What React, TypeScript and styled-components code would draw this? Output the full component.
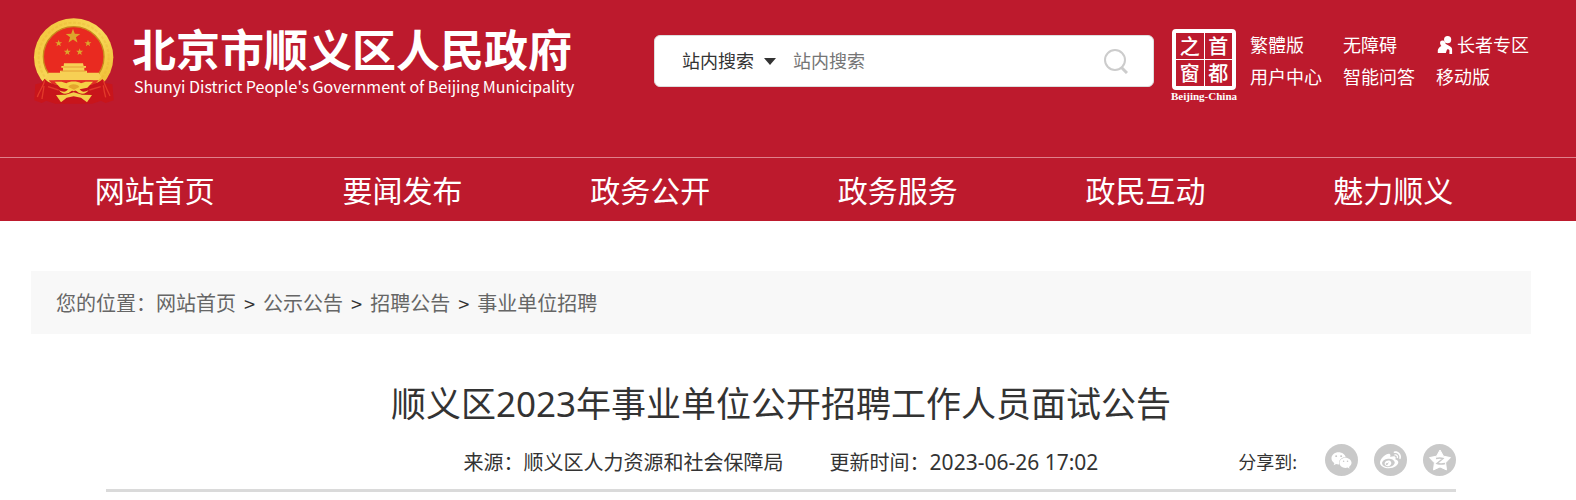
import React from "react";
import styled, { createGlobalStyle } from "styled-components";
import { FaWeibo, FaWeixin } from "react-icons/fa";

const RED = "#bd1a2d";

const GlobalStyle = createGlobalStyle`
  * { box-sizing: border-box; }
  body {
    margin: 0;
    background: #fff;
    color: #333;
    font-family: "Noto Sans", "Noto Sans CJK SC", sans-serif;
    font-size: 20px;
  }
  a { color: inherit; text-decoration: none; }
  h1, p { margin: 0; font-weight: 400; }
`;

const Page = styled.div`
  overflow-x: hidden;
`;

const Header = styled.header`
  background: ${RED};
  color: #fff;
`;

const Container = styled.div`
  padding: 0 45px 0 31px;
`;

const TopBar = styled(Container)`
  display: flex;
  align-items: flex-start;
  min-height: 157px;
  padding-top: 16px;
`;

const Brand = styled.a`
  display: flex;
  flex: none;
  width: 623px;
  gap: 13px;
`;

const BrandText = styled.span`
  display: flex;
  flex-direction: column;
  padding-top: 6px;
  font-family: "Noto Sans CJK SC", sans-serif;
  white-space: nowrap;
`;

const BrandName = styled.span`
  font-size: 44px;
  font-weight: 700;
  line-height: 52px;
`;

const BrandEnglish = styled.span`
  padding-left: 2px;
  font-size: 16px;
  line-height: 24px;
`;

const SearchForm = styled.form`
  display: flex;
  align-items: center;
  flex: 0 1 500px;
  height: 52px;
  margin-top: 19px;
  padding: 0 25px 0 27px;
  background: #fff;
  border: 1px solid #ddd;
  border-radius: 6px;
`;

const ScopeField = styled.label`
  display: flex;
  align-items: center;
  flex: none;
  gap: 10px;
  width: 111px;
`;

const ScopeSelect = styled.select`
  appearance: none;
  width: 72px;
  padding: 0;
  border: 0;
  background: none;
  color: #333;
  font: inherit;
  font-size: 18px;
  line-height: 26px;
`;

const SearchInput = styled.input`
  flex: 1;
  min-width: 0;
  padding: 0;
  border: 0;
  outline: 0;
  font: inherit;
  font-size: 18px;
  line-height: 26px;
  &::placeholder { color: #757575; opacity: 1; }
`;

const SearchButton = styled.button`
  display: flex;
  padding: 0;
  border: 0;
  background: none;
  cursor: pointer;
`;

const Seal = styled.a`
  display: flex;
  flex-direction: column;
  align-items: center;
  flex: none;
  width: 72px;
  margin: 13px 10px 0 14px;
`;

const SealGrid = styled.span`
  display: grid;
  grid-template-columns: 1fr 1fr;
  gap: 1px;
  width: 64px;
  border: 4px solid #fff;
  border-radius: 4px;
  background: #fff;
`;

const SealCell = styled.span`
  background: ${RED};
  font-family: "Noto Sans CJK SC", sans-serif;
  font-size: 20px;
  font-weight: 500;
  line-height: 26px;
  text-align: center;
`;

const SealCaption = styled.span`
  font-family: "Liberation Serif", serif;
  font-size: 11px;
  font-weight: 700;
  line-height: 12px;
  white-space: nowrap;
`;

const QuickLinks = styled.nav`
  display: grid;
  grid-template-columns: repeat(3, 93px);
  margin-top: 13px;
  font-size: 18px;
  line-height: 32px;
  white-space: nowrap;
`;

const QuickLink = styled.a`
  display: flex;
  align-items: center;
  gap: 4px;
`;

const MainNav = styled.nav`
  display: grid;
  grid-template-columns: repeat(6, 1fr);
  padding: 2px 59px 0 31px;
  border-top: 1px solid #e0808b;
`;

const NavLink = styled.a`
  font-size: 30px;
  line-height: 61px;
  text-align: center;
  white-space: nowrap;
`;

const Main = styled(Container)`
  padding-top: 50px;
`;

const Breadcrumb = styled.nav`
  display: flex;
  padding: 2px 25px 0;
  background: #f8f8f8;
  color: #666;
  line-height: 61px;
`;

const Separator = styled.span`
  padding: 0 8px;
  font-family: "Noto Sans CJK SC", sans-serif;
  color: #333;
`;

const Article = styled.article`
  margin: 43px 75px 0;
  border-bottom: 3px solid #dadada;
`;

const Title = styled.h1`
  font-size: 35px;
  line-height: 54px;
  text-align: center;
`;

const Meta = styled.div`
  display: grid;
  grid-template-columns: 1fr auto 1fr;
  align-items: center;
  padding: 13px 0;
`;

const MetaText = styled.p`
  display: flex;
  align-items: baseline;
  grid-column: 2;
  gap: 46px;
  padding-top: 6px;
  line-height: 26px;
  white-space: nowrap;
`;

const UpdateTime = styled.time`
  font-size: 21px;
  line-height: 24px;
`;

const Share = styled.div`
  display: flex;
  align-items: center;
  justify-self: end;
  gap: 16px;
`;

const ShareLabel = styled.span`
  margin-right: 12px;
  padding-top: 4px;
  font-size: 18px;
  line-height: 28px;
`;

const ShareButton = styled.button`
  display: flex;
  align-items: center;
  justify-content: center;
  width: 33px;
  height: 32px;
  padding: 0;
  border: 0;
  border-radius: 50%;
  background: #c9c9c9;
  color: #fff;
  cursor: pointer;
`;

function starPoints(cx: number, cy: number, r: number, inner = 0.4) {
  return Array.from({ length: 10 }, (_, i) => {
    const radius = i % 2 ? r * inner : r;
    const angle = (Math.PI / 5) * i - Math.PI / 2;
    return `${(cx + radius * Math.cos(angle)).toFixed(1)},${(cy + radius * Math.sin(angle)).toFixed(1)}`;
  }).join(" ");
}

function Emblem() {
  return (
    <svg width="88" height="88" viewBox="9 6 264 264" aria-hidden="true">
      <defs>
        <linearGradient id="gold" x1="0" y1="0" x2="1" y2="1">
          <stop offset="0" stopColor="#f2c338" />
          <stop offset="0.5" stopColor="#f8d95a" />
          <stop offset="1" stopColor="#eeb62c" />
        </linearGradient>
      </defs>
      <ellipse cx="137" cy="130" rx="119" ry="117" fill="url(#gold)" />
      <ellipse cx="137" cy="130" rx="105" ry="104" fill="none" stroke="#e4ac2c" strokeWidth="6" strokeDasharray="9 5" opacity="0.25" />
      <ellipse cx="137" cy="128" rx="91" ry="90" fill="#e92a20" stroke="#c98a1c" strokeWidth="4" />
      <polygon points={starPoints(135, 67, 23)} fill="#dca62c" />
      {[[92, 88], [180, 88], [118, 114], [155, 114]].map(([x, y]) => (
        <polygon key={x} points={starPoints(x, y, 11)} fill="#dca62c" />
      ))}
      <path d="M108 148h57l2 8h7v5h-5v9h8v6h35l7 12-8 11H63l-8-11 7-12h34v-6h9v-9h-5v-5h7z" fill="#f7d054" />
      <path d="M106 159h61M100 171h73" stroke="#dc8a27" strokeWidth="2" />
      <path d="M62 199h150l-12 13H74z" fill="#e23024" />
      <path d="M50 194c11 13 28 17 45 20l42 18 42-18c17-3 33-7 44-19l10 12 20 4 4 48-24 8-14-7-26 9H82l-27-9-14 7-22-8 3-48 18-4z" fill="#c8151b" />
      <path d="M50 199c-4 19-17 33-22 50m20-33c-2 17-5 27-6 39m184-56c6 20 14 32 20 47m-20-32c2 17 4 25 7 36M60 218l32 10m126-10-34 10" fill="none" stroke="#e23a2a" strokeWidth="4" />
      <path d="M80 203h21l14 5c7-7 36-7 44 0l14-5h22l-17 18-23 5c7 11 18 7 27 2-8 13-19 12-29 9l-15-11-16 11c-10 3-21 4-29-9 9 5 20 9 27-2l-23-5z" fill="#f5d146" />
      <path d="M121 219c3-11 29-11 33 0l-16 8z" fill="#e5a52d" />
      <path d="M84 243l29-1 24-7 25 7 30 1-15 22-18-14-22-4-21 4-17 14z" fill="#f3cf4b" />
    </svg>
  );
}

function ElderIcon() {
  return (
    <svg width="19" height="20" viewBox="0 0 19 20" fill="currentColor" aria-hidden="true">
      <circle cx="13" cy="4" r="4" />
      <path d="M7 5c3 0 3 2 4 4l4 2c2 1 3 2 3 4v5h-3v-4c-1-2-3-1-3 0l-1 3H2v-3c0-2 2-4 4-5-2-2-2-6 1-6z" />
    </svg>
  );
}

const QUICK_LINKS = ["繁體版", "无障碍", "长者专区", "用户中心", "智能问答", "移动版"];
const NAV_ITEMS = ["网站首页", "要闻发布", "政务公开", "政务服务", "政民互动", "魅力顺义"];
const CRUMBS = ["网站首页", "公示公告", "招聘公告", "事业单位招聘"];

export default function App() {
  return (
    <Page>
      <GlobalStyle />
      <Header>
        <TopBar>
          <Brand href="#">
            <Emblem />
            <BrandText>
              <BrandName>北京市顺义区人民政府</BrandName>
              <BrandEnglish>Shunyi District People's Government of Beijing Municipality</BrandEnglish>
            </BrandText>
          </Brand>
          <SearchForm role="search" onSubmit={(e) => e.preventDefault()}>
            <ScopeField>
              <ScopeSelect aria-label="搜索范围">
                <option>站内搜索</option>
              </ScopeSelect>
              <svg width="12" height="7" viewBox="0 0 12 7" aria-hidden="true">
                <path d="M0 0h12L6 7z" fill="#333" />
              </svg>
            </ScopeField>
            <SearchInput type="text" placeholder="站内搜索" aria-label="站内搜索" />
            <SearchButton type="submit" aria-label="搜索">
              <svg width="24" height="25" viewBox="0 0 24 25" fill="none" stroke="#ccc" strokeWidth="2" aria-hidden="true">
                <circle cx="11" cy="11" r="10" />
                <path d="M17 18l6 6" strokeWidth="3" />
              </svg>
            </SearchButton>
          </SearchForm>
          <Seal href="#">
            <SealGrid>
              {["之", "首", "窗", "都"].map((c) => (
                <SealCell key={c}>{c}</SealCell>
              ))}
            </SealGrid>
            <SealCaption>Beijing-China</SealCaption>
          </Seal>
          <QuickLinks>
            {QUICK_LINKS.map((label) => (
              <QuickLink key={label} href="#">
                {label === "长者专区" && <ElderIcon />}
                {label}
              </QuickLink>
            ))}
          </QuickLinks>
        </TopBar>
        <MainNav>
          {NAV_ITEMS.map((label) => (
            <NavLink key={label} href="#">{label}</NavLink>
          ))}
        </MainNav>
      </Header>
      <Main as="main">
        <Breadcrumb>
          <span>您的位置：</span>
          {CRUMBS.map((label, i) => (
            <React.Fragment key={label}>
              {i > 0 && <Separator>&gt;</Separator>}
              <a href="#">{label}</a>
            </React.Fragment>
          ))}
        </Breadcrumb>
        <Article>
          <Title>顺义区2023年事业单位公开招聘工作人员面试公告</Title>
          <Meta>
            <MetaText>
              <span>来源：顺义区人力资源和社会保障局</span>
              <span>更新时间：<UpdateTime>2023-06-26 17:02</UpdateTime></span>
            </MetaText>
            <Share>
              <ShareLabel>分享到:</ShareLabel>
              <ShareButton aria-label="微信"><FaWeixin size={21} /></ShareButton>
              <ShareButton aria-label="微博"><FaWeibo size={21} /></ShareButton>
              <ShareButton aria-label="QQ空间">
                <svg width="24" height="24" viewBox="0 0 24 24" aria-hidden="true">
                  <polygon points={starPoints(12, 13, 11, 0.54)} fill="#fff" stroke="#fff" strokeLinejoin="round" />
                  <path d="M8 10.5q4-1 7 0l-6 5q4 1 8 0" fill="none" stroke="#c9c9c9" strokeWidth="1.4" />
                </svg>
              </ShareButton>
            </Share>
          </Meta>
        </Article>
      </Main>
    </Page>
  );
}
